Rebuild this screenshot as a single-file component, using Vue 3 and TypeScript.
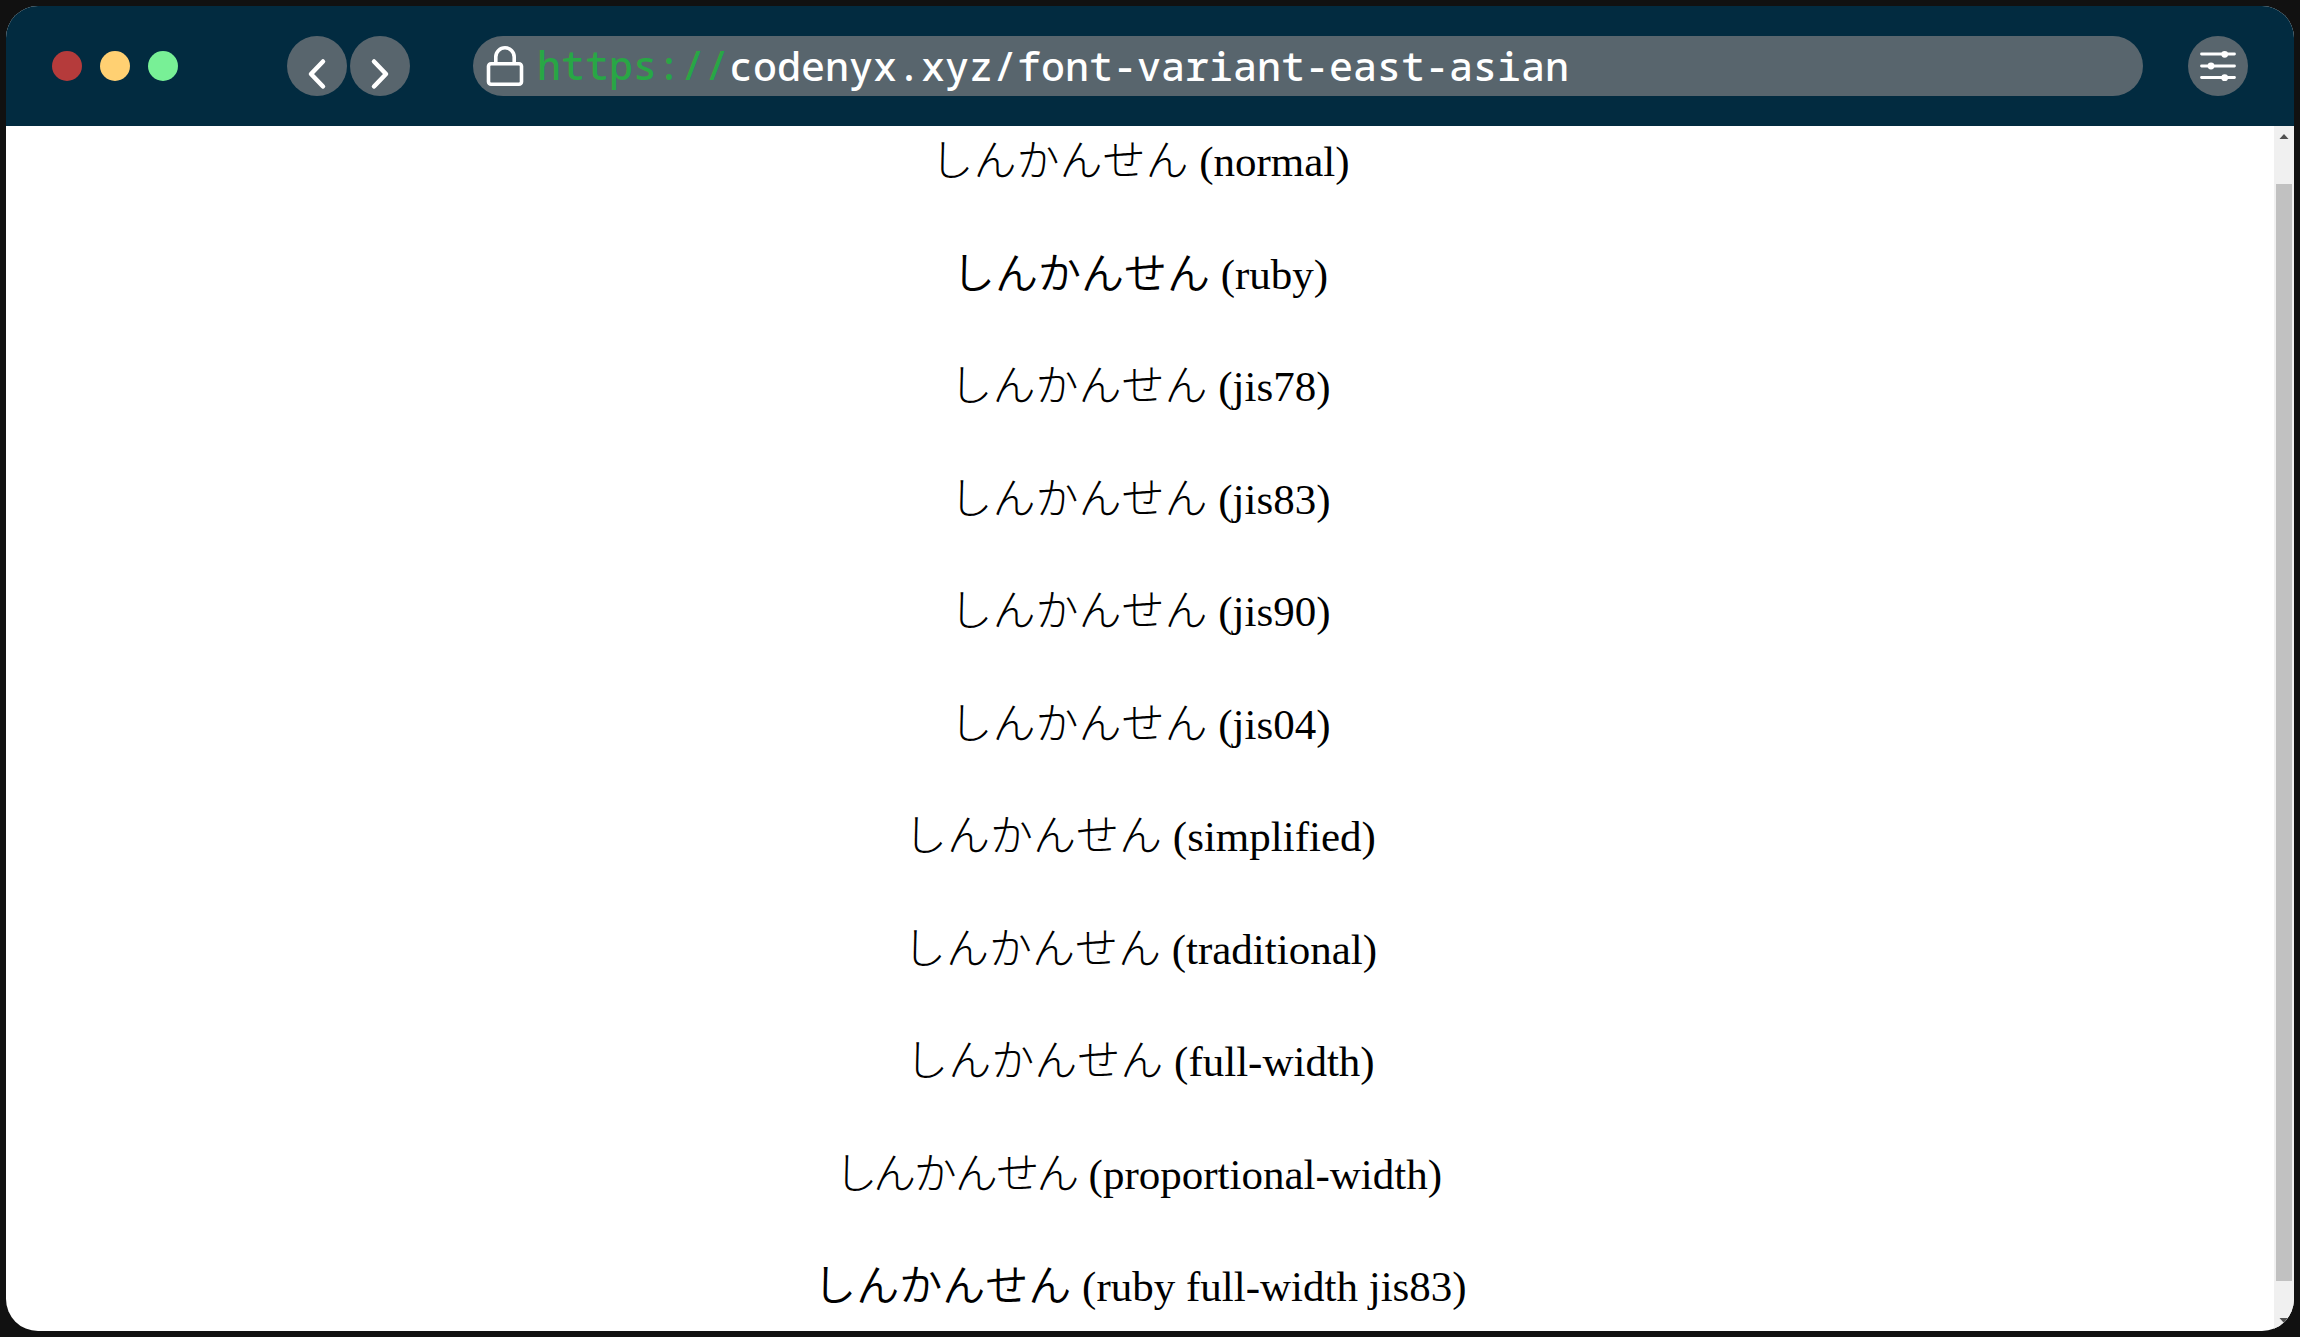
<script setup lang="ts">
import { ref } from 'vue'

interface Sample {
  variant: string
  kind?: 'ruby' | 'proportional'
}

const address = ref('codenyx.xyz/font-variant-east-asian')

const samples: Sample[] = [
  { variant: 'normal' },
  { variant: 'ruby', kind: 'ruby' },
  { variant: 'jis78' },
  { variant: 'jis83' },
  { variant: 'jis90' },
  { variant: 'jis04' },
  { variant: 'simplified' },
  { variant: 'traditional' },
  { variant: 'full-width' },
  { variant: 'proportional-width', kind: 'proportional' },
  { variant: 'ruby full-width jis83', kind: 'ruby' },
]
</script>

<template>
  <div class="window">
    <header class="toolbar">
      <div class="lights">
        <span class="light red"></span>
        <span class="light yellow"></span>
        <span class="light green"></span>
      </div>
      <nav class="history">
        <button class="round" type="button" aria-label="Back">
          <svg viewBox="0 0 60 60"><path d="M36 25.500L24 38l12 12.500" class="chevron" /></svg>
        </button>
        <button class="round" type="button" aria-label="Forward">
          <svg viewBox="0 0 60 60"><path d="M24 25.500L36 38l-12 12.500" class="chevron" /></svg>
        </button>
      </nav>
      <div class="address">
        <svg class="lock" viewBox="0 0 40 40" aria-hidden="true">
          <rect x="3.500" y="17.700" width="33" height="20.500" rx="2.500" />
          <path d="M10.800 17V11a9.200 9.200 0 0 1 18.400 0v6" />
        </svg>
        <label class="scheme" for="address">https://</label>
        <input id="address" v-model="address" class="url" type="text" spellcheck="false" />
      </div>
      <button class="round" type="button" aria-label="Settings">
        <svg viewBox="0 0 60 60">
          <path d="M13.500 18h33M13.500 30h33M13.500 41.500h33" class="rail" />
          <circle cx="36.700" cy="18.300" r="3.400" />
          <circle cx="23" cy="30" r="3.400" />
          <circle cx="36.700" cy="41.700" r="3.400" />
        </svg>
      </button>
    </header>

    <div class="viewport">
      <main class="samples">
        <p v-for="s in samples" :key="s.variant" class="sample">
          <span class="kana" :class="s.kind" lang="ja">しんかんせん</span> ({{ s.variant }})
        </p>
      </main>
      <div class="scrollbar" aria-hidden="true">
        <svg class="arrow" viewBox="0 0 20 20"><path d="M5.500 13L10 8l4.500 5z" /></svg>
        <div class="thumb"></div>
        <svg class="arrow" viewBox="0 0 20 20"><path d="M5.500 7L10 12l4.500-5z" /></svg>
      </div>
    </div>
  </div>
</template>

<style>
body {
  margin: 0;
  background: #111;
}
</style>

<style scoped>
.window {
  box-sizing: border-box;
  display: flex;
  flex-direction: column;
  min-height: calc(100vh - 12px);
  margin: 6px;
  overflow: hidden;
  border-radius: 32px;
  background: #fff;
}

.toolbar {
  display: flex;
  align-items: center;
  height: 120px;
  padding: 0 46px;
  background: #022b40;
}

.lights {
  display: flex;
  gap: 18px;
}

.light {
  width: 30px;
  height: 30px;
  border-radius: 50%;
}

.red { background: #b53b3b; }
.yellow { background: #ffd072; }
.green { background: #78f096; }

.history {
  display: flex;
  gap: 3px;
  margin: 0 63px 0 109px;
}

.round {
  flex: none;
  width: 60px;
  height: 60px;
  padding: 0;
  border: 0;
  border-radius: 50%;
  background: #58656d;
}

.round svg {
  display: block;
  width: 100%;
  height: 100%;
  fill: #fff;
}

.chevron {
  fill: none;
  stroke: #fff;
  stroke-width: 4.5;
  stroke-linecap: round;
  stroke-linejoin: round;
}

.rail {
  stroke: #fff;
  stroke-width: 2.8;
  stroke-linecap: round;
}

.address {
  display: flex;
  flex: 1;
  align-items: center;
  min-width: 0;
  height: 60px;
  box-sizing: border-box;
  margin-right: 45px;
  padding: 0 30px 0 12px;
  border-radius: 30px;
  background: #58656d;
  font-family: "Noto Sans Mono", "DejaVu Sans Mono", monospace;
  font-size: 40px;
  font-weight: 500;
}

.lock {
  flex: none;
  width: 40px;
  height: 40px;
  margin-right: 12px;
  fill: none;
  stroke: #fff;
  stroke-width: 3.6;
}

.scheme,
.url {
  height: 60px;
  box-sizing: border-box;
  padding: 0 0 2px;
  line-height: 58px;
}

.scheme {
  color: #28a745;
}

.url {
  flex: 1;
  min-width: 0;
  border: 0;
  outline: 0;
  background: none;
  color: #fff;
  font-family: inherit;
  font-size: inherit;
  font-weight: inherit;
}

.viewport {
  display: flex;
  flex: 1;
}

.samples {
  display: flex;
  flex: 1;
  flex-direction: column;
  justify-content: space-between;
  padding: 6px 0 14px;
  color: #000;
  font-family: "Liberation Serif", "Noto Sans CJK JP", serif;
  font-size: 43px;
  line-height: 60px;
  text-align: center;
}

.sample {
  margin: 0;
}

.kana {
  font-family: "Noto Sans CJK JP", sans-serif;
  font-weight: 300;
  line-height: 1;
}

.ruby {
  font-weight: 350;
  font-variant-east-asian: ruby;
}

.proportional {
  font-variant-east-asian: proportional-width;
  font-feature-settings: "palt";
}

.scrollbar {
  display: flex;
  flex-direction: column;
  align-items: center;
  width: 20px;
  background: #f0f0f0;
}

.arrow {
  width: 20px;
  height: 20px;
  fill: #505050;
}

.thumb {
  flex: 1;
  width: 16px;
  margin: 38px 0 30px;
  background: #c1c1c1;
}
</style>
